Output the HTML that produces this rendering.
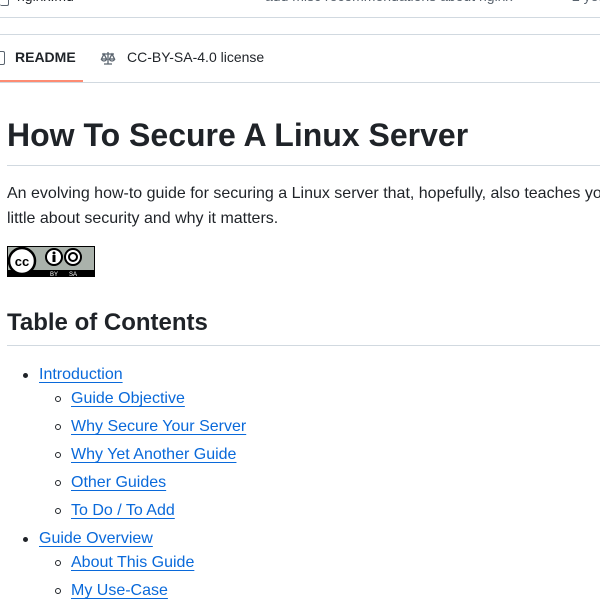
<!DOCTYPE html>
<html><head><style>
body{margin:0;width:600px;height:600px;overflow:hidden;background:#fff;font-family:"Liberation Sans",sans-serif;color:#1f2328;position:relative}
.a{position:absolute;white-space:nowrap}
.line{position:absolute;left:0;width:600px;height:1px;background:#d1d9e0}
a{color:#0969da;text-decoration:underline;text-underline-offset:3px}
.li{position:absolute;font-size:16px;line-height:24px;white-space:nowrap}
.dot{position:absolute;width:5px;height:5px;border-radius:50%;background:#1f2328}
.circ{position:absolute;width:4px;height:4px;border-radius:50%;border:1px solid #1f2328}
</style></head><body>
<div class="a" style="left:17px;top:-12px;font-size:14px;color:#1f2328">nginx.md</div>
<div class="a" style="left:0;top:-8px;width:8px;height:12px;border:1px solid #59636e;border-left:none;border-radius:2px"></div>
<div class="a" style="left:265px;top:-12px;font-size:14px;color:#59636e">add misc recommendations about nginx</div>
<div class="a" style="left:572px;top:-12px;font-size:14px;color:#59636e">2 years ago</div>
<div class="line" style="top:17px"></div>
<div class="line" style="top:34px"></div>
<div class="a" style="left:-4px;top:51px;width:7px;height:12px;border:1.5px solid #59636e;border-radius:2px"></div>
<div class="a" style="left:15px;top:49px;font-size:14px;font-weight:bold">README</div>
<svg class="a" style="left:100px;top:50px" width="16" height="16" viewBox="0 0 16 16" fill="none" stroke="#59636e" stroke-width="1.3"><path d="M8 2v12M4 14h8M2 4h12M4 4l-2.5 5h5zM12 4l-2.5 5h5zM1.5 9a2.5 2 0 0 0 5 0M9.5 9a2.5 2 0 0 0 5 0"/></svg>
<div class="a" style="left:127px;top:49px;font-size:14px">CC-BY-SA-4.0 license</div>
<div class="line" style="top:82px"></div>
<div class="a" style="left:0;top:80px;width:83px;height:2px;background:#fd8c73"></div>
<div class="a" style="left:7px;top:115px;font-size:32px;font-weight:bold;line-height:40px">How To Secure A Linux Server</div>
<div class="line" style="left:7px;top:165px"></div>
<div class="a" style="left:7px;top:181px;font-size:16px;line-height:25px">An evolving how-to guide for securing a Linux server that, hopefully, also teaches you a<br>little about security and why it matters.</div>
<svg class="a" style="left:7px;top:246px" width="88" height="31" viewBox="0 0 88 31">
<rect x="0.5" y="0.5" width="87" height="30" fill="#aab2ab" stroke="#000"/>
<rect x="1" y="24" width="86" height="6" fill="#000"/>
<circle cx="15" cy="15" r="13" fill="#fff" stroke="#000" stroke-width="2.5"/>
<text x="15" y="20" font-size="13" font-weight="bold" text-anchor="middle" font-family="Liberation Sans">cc</text>
<circle cx="47" cy="11" r="8" fill="#fff" stroke="#000" stroke-width="2"/>
<circle cx="47" cy="7" r="1.5" fill="#000"/><rect x="45.5" y="9" width="3" height="7" fill="#000"/>
<circle cx="66" cy="11" r="8" fill="#fff" stroke="#000" stroke-width="2"/>
<circle cx="66" cy="11" r="4" fill="none" stroke="#000" stroke-width="2"/>
<text x="47" y="30" font-size="6" fill="#fff" text-anchor="middle" font-family="Liberation Sans">BY</text>
<text x="66" y="30" font-size="6" fill="#fff" text-anchor="middle" font-family="Liberation Sans">SA</text>
</svg>
<div class="a" style="left:7px;top:308px;font-size:24px;font-weight:bold;line-height:30px">Table of Contents</div>
<div class="line" style="left:7px;top:345px"></div>
<div class="dot" style="left:23px;top:373px"></div><div class="li" style="left:39px;top:363px"><a>Introduction</a></div>
<div class="circ" style="left:55px;top:396px"></div><div class="li" style="left:71px;top:387px"><a>Guide Objective</a></div>
<div class="circ" style="left:55px;top:424px"></div><div class="li" style="left:71px;top:415px"><a>Why Secure Your Server</a></div>
<div class="circ" style="left:55px;top:452px"></div><div class="li" style="left:71px;top:443px"><a>Why Yet Another Guide</a></div>
<div class="circ" style="left:55px;top:480px"></div><div class="li" style="left:71px;top:471px"><a>Other Guides</a></div>
<div class="circ" style="left:55px;top:508px"></div><div class="li" style="left:71px;top:499px"><a>To Do / To Add</a></div>
<div class="dot" style="left:23px;top:537px"></div><div class="li" style="left:39px;top:527px"><a>Guide Overview</a></div>
<div class="circ" style="left:55px;top:560px"></div><div class="li" style="left:71px;top:551px"><a>About This Guide</a></div>
<div class="circ" style="left:55px;top:588px"></div><div class="li" style="left:71px;top:579px"><a>My Use-Case</a></div>
</body></html>
